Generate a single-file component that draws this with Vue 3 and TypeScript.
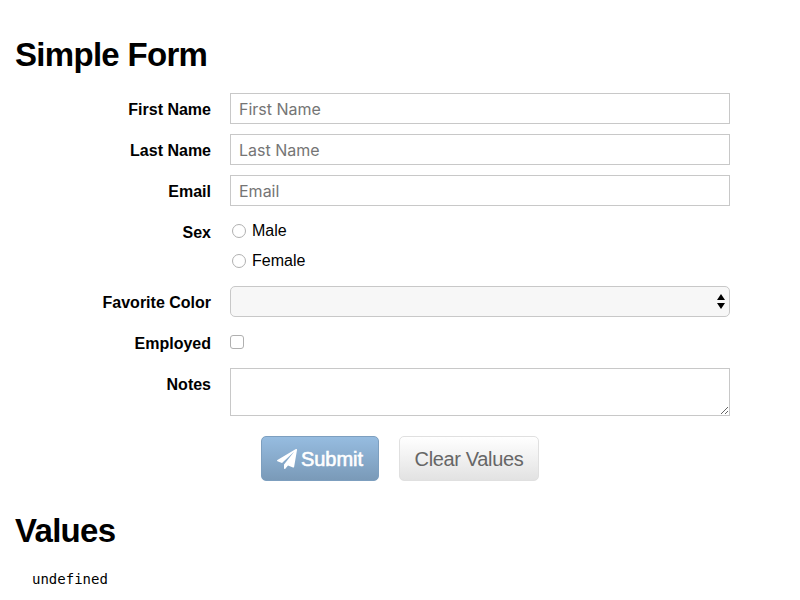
<script setup lang="ts">
import { reactive } from 'vue'

type TextField = 'firstName' | 'lastName' | 'email'

const textFields: { key: TextField; label: string }[] = [
  { key: 'firstName', label: 'First Name' },
  { key: 'lastName', label: 'Last Name' },
  { key: 'email', label: 'Email' },
]
const sexes = ['Male', 'Female']

const empty = () => ({
  firstName: '',
  lastName: '',
  email: '',
  sex: '',
  favoriteColor: '',
  employed: false,
  notes: '',
})
const form = reactive(empty())
const clear = () => Object.assign(form, empty())
</script>

<template>
  <main class="page">
    <h2 class="title">Simple Form</h2>
    <form class="form" @submit.prevent>
      <div v-for="f in textFields" :key="f.key" class="row">
        <label class="label" :for="f.key">{{ f.label }}</label>
        <input :id="f.key" v-model="form[f.key]" class="text" type="text" :placeholder="f.label" />
      </div>
      <div class="row sex-row">
        <span class="label">Sex</span>
        <div class="radios">
          <label v-for="s in sexes" :key="s" class="option">
            <input v-model="form.sex" class="radio" type="radio" name="sex" :value="s" />
            <span class="option-text">{{ s }}</span>
          </label>
        </div>
      </div>
      <div class="row">
        <label class="label" for="color">Favorite Color</label>
        <div id="color" class="select" tabindex="0">
          <svg class="arrows" width="8" height="15" viewBox="0 0 8 15">
            <path d="M4 0 8 6H0ZM4 15 8 9H0Z" fill="#000" />
          </svg>
        </div>
      </div>
      <div class="row">
        <label class="label" for="employed">Employed</label>
        <input id="employed" v-model="form.employed" class="check" type="checkbox" />
      </div>
      <div class="row notes-row">
        <label class="label" for="notes">Notes</label>
        <textarea id="notes" v-model="form.notes" class="notes"></textarea>
      </div>
      <div class="actions">
        <button class="btn primary" type="submit">
          <svg class="plane" width="20" height="20" viewBox="0 0 20 20">
            <path
              fill="#fff"
              d="M19.7.1q.35.25.3.8l-2.9 17q-.1.4-.4.6-.3.15-.7 0l-5-2.1-2.7 3.3q-.2.3-.6.3-.7 0-.7-.7v-3.9L17.300 2.600 5 14 .4 12.200q-.4-.2-.4-.6 0-.5.4-.7L18.900.1q.4-.2.8 0z"
            />
          </svg>
          <span class="submit-text">Submit</span>
        </button>
        <button class="btn" type="button" @click="clear">
          <span class="clear-text">Clear Values</span>
        </button>
      </div>
    </form>
    <h2 class="title values">Values</h2>
    <pre class="output">undefined</pre>
  </main>
</template>

<style>
body {
  background: #fff;
}
</style>

<style scoped>
.page {
  box-sizing: border-box;
  height: 600px;
  padding: 35px 15px 0;
  overflow: hidden;
  color: #000;
  font: 16px/20px 'Liberation Sans', Arial, sans-serif;
}
.title {
  margin: 0;
  font-size: 33px;
  line-height: 40px;
  font-weight: 700;
  letter-spacing: -0.7px;
}
.form {
  display: flex;
  flex-direction: column;
  gap: 10px;
  padding-top: 18px;
}
.row {
  display: grid;
  grid-template-columns: 196px 500px;
  column-gap: 19px;
  min-height: 31px;
  align-items: start;
}
.label {
  padding-top: 7px;
  text-align: right;
  font-weight: 700;
}
.text,
.notes {
  box-sizing: border-box;
  width: 500px;
  height: 31px;
  margin: 0;
  padding: 1px 8px 0;
  border: 1px solid #c8c8c8;
  border-radius: 0;
  outline: none;
  background: #fff;
  font: 16px/20px Inter, sans-serif;
}
.text::placeholder {
  color: #757575;
  opacity: 1;
}
.sex-row {
  height: 60px;
}
.radios {
  display: flex;
  flex-direction: column;
}
.option {
  display: flex;
  align-items: center;
  gap: 6px;
  height: 30px;
  padding-left: 2px;
}
.option-text {
  line-height: 18px;
}
.radio,
.check {
  appearance: none;
  box-sizing: border-box;
  width: 14px;
  height: 14px;
  margin: 0;
  border: 1px solid #b0b0b0;
  background: #fff;
}
.radio {
  border-radius: 50%;
}
.check {
  margin-top: 8px;
  border-radius: 3px;
}
.select {
  box-sizing: border-box;
  display: flex;
  align-items: center;
  justify-content: flex-end;
  height: 31px;
  padding-right: 4px;
  border: 1px solid #c8c8c8;
  border-radius: 5px;
  background: #f7f7f7;
}
.notes-row,
.notes {
  height: 48px;
}
.notes {
  resize: vertical;
}
.actions {
  display: flex;
  gap: 20px;
  padding: 10px 0 0 246px;
}
.btn {
  box-sizing: border-box;
  display: flex;
  align-items: center;
  justify-content: center;
  width: 140px;
  height: 45px;
  padding: 0;
  border: 1px solid #e0e0e0;
  border-radius: 5px;
  background: linear-gradient(#fff, #e2e2e2);
  color: #666;
  font: 20px/24px 'Liberation Sans', Arial, sans-serif;
}
.primary {
  width: 118px;
  gap: 4px;
  border-color: #7d9fbf;
  background: linear-gradient(#96bce0, #7a9ab8);
  color: #fff;
}
.submit-text {
  -webkit-text-stroke: 0.6px #fff;
}
.clear-text {
  letter-spacing: -0.35px;
}
.values {
  margin-top: 30px;
}
.output {
  margin: 18px 0 0 17px;
  font: 14px/20px 'DejaVu Sans Mono', monospace;
}
</style>
